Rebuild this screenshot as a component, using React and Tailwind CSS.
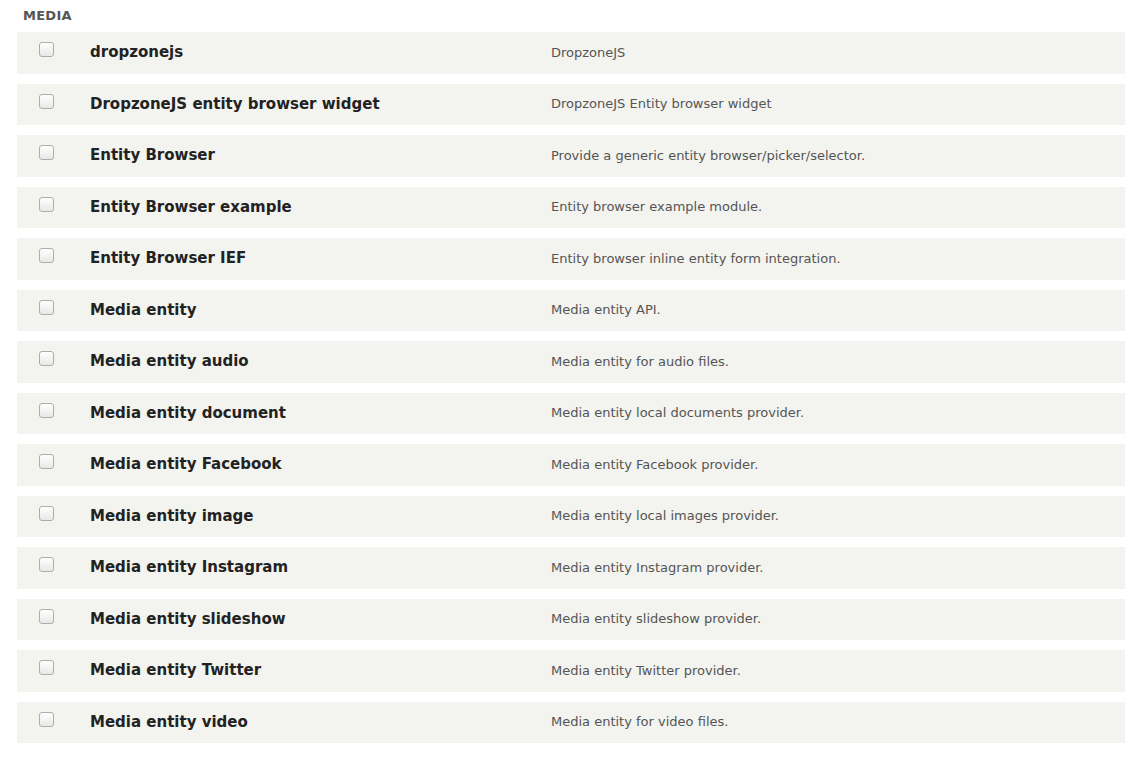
const rows = [
  ["dropzonejs", "DropzoneJS"],
  ["DropzoneJS entity browser widget", "DropzoneJS Entity browser widget"],
  ["Entity Browser", "Provide a generic entity browser/picker/selector."],
  ["Entity Browser example", "Entity browser example module."],
  ["Entity Browser IEF", "Entity browser inline entity form integration."],
  ["Media entity", "Media entity API."],
  ["Media entity audio", "Media entity for audio files."],
  ["Media entity document", "Media entity local documents provider."],
  ["Media entity Facebook", "Media entity Facebook provider."],
  ["Media entity image", "Media entity local images provider."],
  ["Media entity Instagram", "Media entity Instagram provider."],
  ["Media entity slideshow", "Media entity slideshow provider."],
  ["Media entity Twitter", "Media entity Twitter provider."],
  ["Media entity video", "Media entity for video files."],
];

export default function App() {
  return (
    <div className="w-[1125px] h-[765px] bg-white overflow-hidden font-['DejaVu_Sans',sans-serif]">
      <div className="pl-[23px] pt-[8px] h-[32px] text-[13px] leading-[16px] font-bold uppercase text-[#555555] tracking-[0.02em]">
        Media
      </div>
      <div className="ml-[17px] flex flex-col gap-[10px]">
        {rows.map(([name, desc]) => (
          <div key={name} className="h-[41.5px] bg-[#f3f3ef] flex items-start">
            <div className="w-[73px] pl-[22px] pt-[10px]">
              <div className="w-[15px] h-[15px] rounded-[3px] border border-[#adadad] bg-gradient-to-b from-[#ffffff] to-[#e8e8e8]" />
            </div>
            <div className="w-[461px] pt-[10px] text-[15px] font-bold text-[#222222] leading-[20px]">{name}</div>
            <div className="pt-[10.5px] text-[13px] text-[#555555] leading-[20px]">{desc}</div>
          </div>
        ))}
      </div>
    </div>
  );
}
